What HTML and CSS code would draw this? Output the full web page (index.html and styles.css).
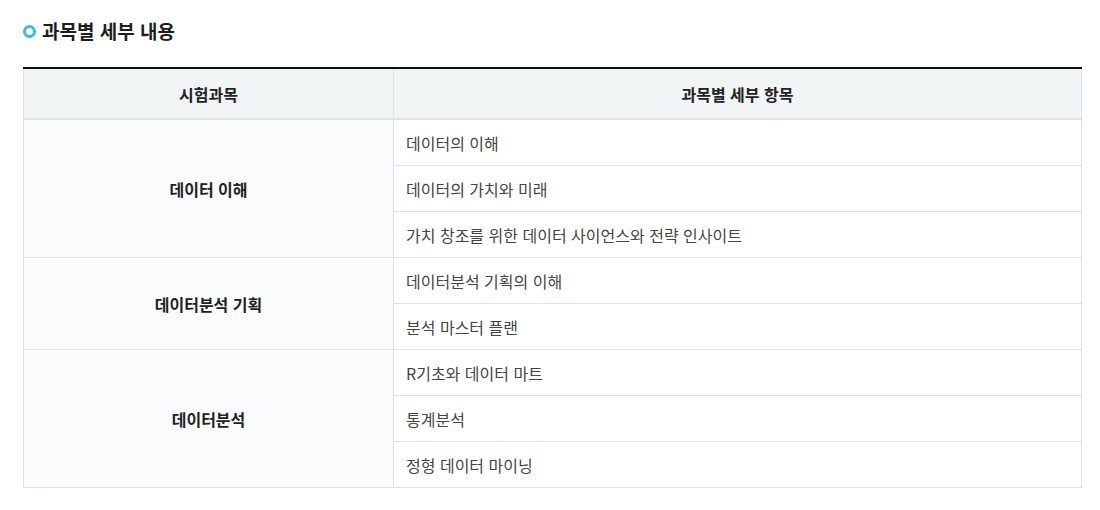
FILE: index.html
```html
<!DOCTYPE html>
<html lang="ko">
<head>
    <meta charset="utf-8">
    <title>과목별 세부 내용</title>
    <link rel="stylesheet" href="styles.css">
</head>
<body>
    <div class="wrap">
        <h3 class="sub-title"><span class="dot"></span>과목별 세부 내용</h3>

        <table class="tbl">
            <colgroup>
                <col class="col-subject">
                <col>
            </colgroup>
            <thead>
                <tr>
                    <th>시험과목</th>
                    <th>과목별 세부 항목</th>
                </tr>
            </thead>
            <tbody>
                <tr>
                    <th rowspan="3">데이터 이해</th>
                    <td>데이터의 이해</td>
                </tr>
                <tr><td>데이터의 가치와 미래</td></tr>
                <tr><td>가치 창조를 위한 데이터 사이언스와 전략 인사이트</td></tr>
                <tr>
                    <th rowspan="2">데이터분석 기획</th>
                    <td>데이터분석 기획의 이해</td>
                </tr>
                <tr><td>분석 마스터 플랜</td></tr>
                <tr>
                    <th rowspan="3">데이터분석</th>
                    <td>R기초와 데이터 마트</td>
                </tr>
                <tr><td>통계분석</td></tr>
                <tr><td>정형 데이터 마이닝</td></tr>
            </tbody>
        </table>
    </div>
</body>
</html>
```

FILE: styles.css
```css
body {
    margin: 0;
    background: #fff;
    font-family: "Noto Sans CJK KR", "Noto Sans", sans-serif;
    color: #333;
}
.wrap {
    padding: 15px 18px 0 23px;
}
.sub-title {
    display: flex;
    align-items: center;
    gap: 6px;
    margin: 0 0 20px;
    font-size: 19px;
    font-weight: 700;
    color: #1e1e1e;
    line-height: 32px;
}
.dot {
    width: 7px;
    height: 7px;
    border: 3px solid #3dbdd5;
    border-radius: 50%;
}
.tbl {
    width: 1059px;
    border-collapse: collapse;
    border-top: 2px solid #111;
    font-size: 16px;
}
.col-subject {
    width: 370px;
}
.tbl thead th {
    height: 49px;
    padding: 0;
    background: #f2f5f6;
    border-bottom: 2px solid #dfe2e3;
    border-left: 1px solid #e1e1e1;
    border-right: 1px solid #e1e1e1;
    font-weight: 700;
    color: #222;
}
.tbl tbody th {
    background: #fafbfc;
    font-weight: 700;
    color: #222;
    border: 1px solid #e1e1e1;
}
.tbl td {
    height: 45px;
    padding: 0 12px;
    border: 1px solid #e1e1e1;
    color: #444;
    font-weight: 400;
}
```
